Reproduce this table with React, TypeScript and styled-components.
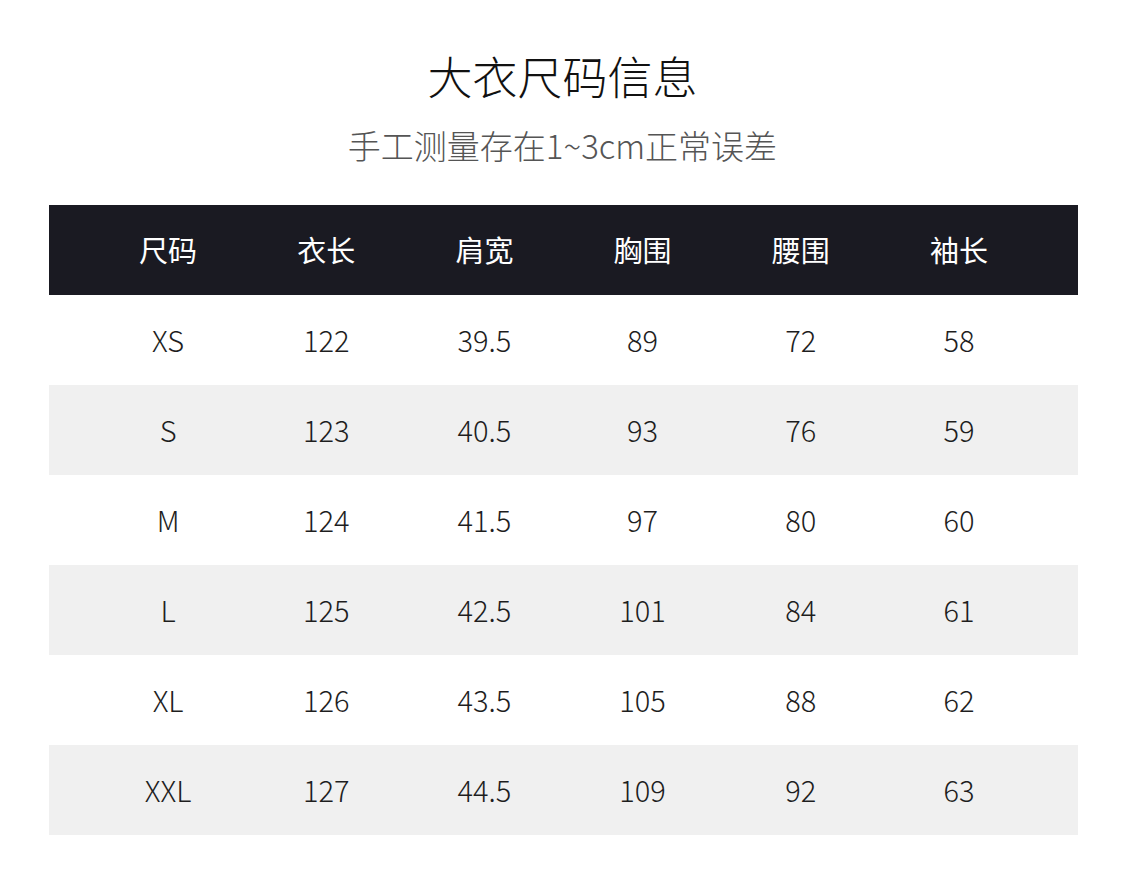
import React from 'react';
import styled, { createGlobalStyle } from 'styled-components';

const GlobalStyle = createGlobalStyle`
  body {
    margin: 0;
    background: #ffffff;
    font-family: "Noto Sans CJK SC", "Noto Sans", sans-serif;
  }
`;

const Page = styled.div`
  width: 1125px;
  height: 882px;
  padding-top: 46px;
  box-sizing: border-box;
  display: flex;
  flex-direction: column;
  align-items: center;
`;

const Title = styled.h1`
  margin: 0;
  font-size: 45px;
  line-height: 60px;
  font-weight: 300;
  color: #111111;
`;

const Subtitle = styled.p`
  margin: 19px 0 0;
  font-size: 33px;
  line-height: 40px;
  font-weight: 300;
  color: #555555;
`;

const Table = styled.div`
  margin-top: 40px;
  margin-left: 2px;
  width: 1029px;
  display: flex;
  flex-direction: column;
`;

const Row = styled.div<{ $variant: 'head' | 'plain' | 'stripe' }>`
  display: grid;
  grid-template-columns: repeat(6, 1fr);
  padding: 0 40px;
  height: 90px;
  align-items: center;
  background: ${({ $variant }) =>
    $variant === 'head' ? '#1a1a22' : $variant === 'stripe' ? '#f0f0f0' : '#ffffff'};
  color: ${({ $variant }) => ($variant === 'head' ? '#ffffff' : '#1e1e1e')};
  font-weight: ${({ $variant }) => ($variant === 'head' ? 400 : 300)};
`;

const Cell = styled.div`
  text-align: center;
  font-size: 29px;
  line-height: 40px;
  margin-top: -2px;
`;

const headers = ['尺码', '衣长', '肩宽', '胸围', '腰围', '袖长'];

const sizes: string[][] = [
  ['XS', '122', '39.5', '89', '72', '58'],
  ['S', '123', '40.5', '93', '76', '59'],
  ['M', '124', '41.5', '97', '80', '60'],
  ['L', '125', '42.5', '101', '84', '61'],
  ['XL', '126', '43.5', '105', '88', '62'],
  ['XXL', '127', '44.5', '109', '92', '63'],
];

const App: React.FC = (): JSX.Element => {
  return (
    <>
      <GlobalStyle />
      <Page>
        <Title>大衣尺码信息</Title>
        <Subtitle>手工测量存在1~3cm正常误差</Subtitle>
        <Table>
          <Row $variant="head">
            {headers.map((h) => (
              <Cell key={h}>{h}</Cell>
            ))}
          </Row>
          {sizes.map((row, index) => (
            <Row key={row[0]} $variant={index % 2 === 1 ? 'stripe' : 'plain'}>
              {row.map((value, i) => (
                <Cell key={i}>{value}</Cell>
              ))}
            </Row>
          ))}
        </Table>
      </Page>
    </>
  );
};

export default App;
